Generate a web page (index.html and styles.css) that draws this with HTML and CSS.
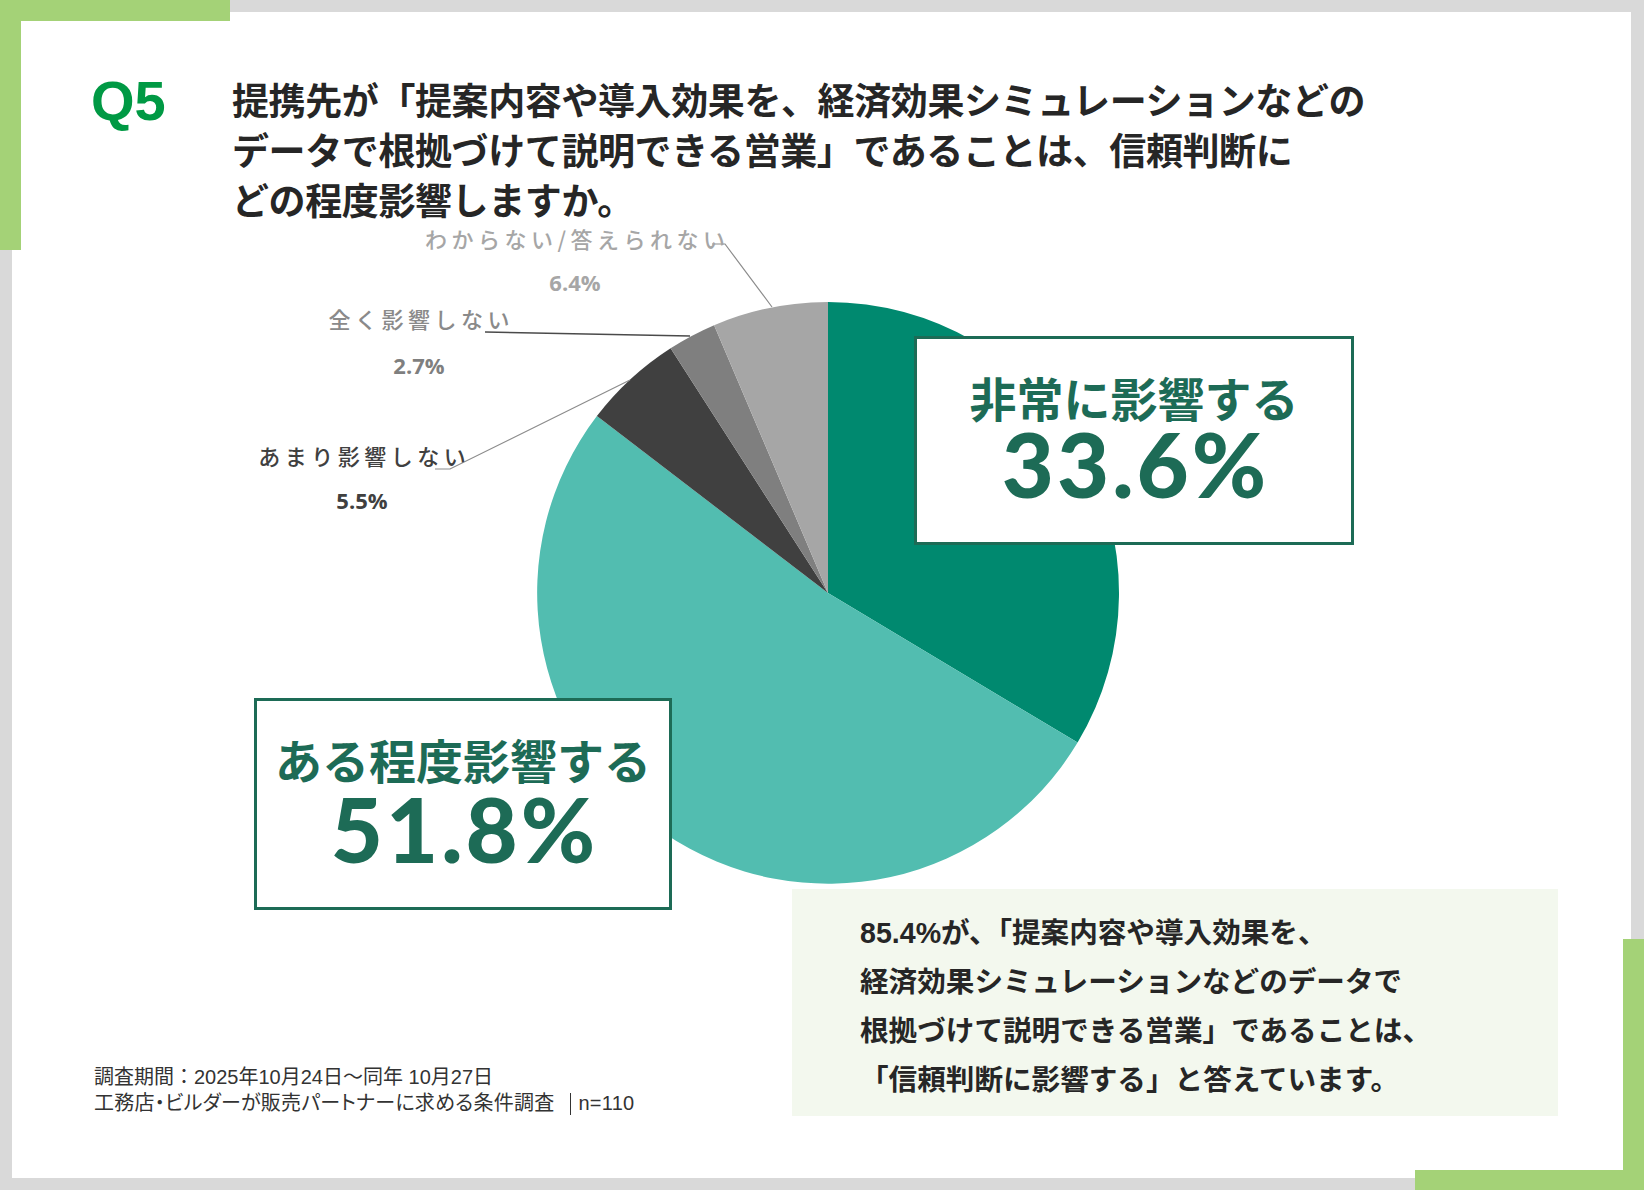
FILE: index.html
```html
<!DOCTYPE html>
<html lang="ja">
<head>
<meta charset="utf-8">
<title>Q5 調査結果</title>
<link rel="stylesheet" href="styles.css">
</head>
<body>
<div class="page">
  <div class="corner corner-tl"></div>
  <div class="corner corner-br"></div>
  <main class="panel">
    <header class="q-head">
      <div class="q-num">Q5</div>
      <h1 class="q-title">提携先が「提案内容や導入効果を、経済効果シミュレーションなどの<br>データで根拠づけて説明できる営業」であることは、信頼判断に<br>どの程度影響しますか。</h1>
    </header>

    <section class="chart">
      <svg class="pie" width="1619" height="679" viewBox="0 0 1619 679" xmlns="http://www.w3.org/2000/svg">
        <path class="s-high" d="M816,383 L816,92 A291,291 0 0 1 1065.6,532.6 Z"/>
        <path class="s-mid" d="M816,383 L1065.6,532.6 A291,291 0 1 1 584.9,206.1 Z"/>
        <path class="s-little" d="M816,383 L584.9,206.1 A291,291 0 0 1 658.6,138.3 Z"/>
        <path class="s-none" d="M816,383 L658.6,138.3 A291,291 0 0 1 702.1,115.2 Z"/>
        <path class="s-unknown" d="M816,383 L702.1,115.2 A291,291 0 0 1 816,92 Z"/>
        <polyline class="lead lead-unknown" points="700,34 713,34 760,97"/>
        <polyline class="lead lead-none" points="473,122 678,126"/>
        <polyline class="lead lead-little" points="423,259 438,259 618,170"/>
      </svg>

      <div class="pie-label l-unknown">
        <span class="pl-name">わからない/答えられない</span>
        <span class="pl-val">6.4%</span>
      </div>
      <div class="pie-label l-none">
        <span class="pl-name">全く影響しない</span>
        <span class="pl-val">2.7%</span>
      </div>
      <div class="pie-label l-little">
        <span class="pl-name">あまり影響しない</span>
        <span class="pl-val">5.5%</span>
      </div>

      <div class="result-box box-high">
        <span class="rb-label">非常に影響する</span>
        <span class="rb-value">33.6%</span>
      </div>
      <div class="result-box box-mid">
        <span class="rb-label">ある程度影響する</span>
        <span class="rb-value">51.8%</span>
      </div>
    </section>

    <section class="bottom">
      <div class="note">
        <p>調査期間：2025年10月24日～同年 10月27日</p>
        <p class="note-src">工務店・ビルダーが販売パートナーに求める条件調査<span class="sep"></span>n=110</p>
      </div>
      <div class="summary">
        <p>85.4%が、「提案内容や導入効果を、<br>経済効果シミュレーションなどのデータで<br>根拠づけて説明できる営業」であることは、<br>「信頼判断に影響する」と答えています。</p>
      </div>
    </section>
  </main>
</div>
</body>
</html>
```

FILE: styles.css
```css
* {
  box-sizing: border-box;
}

html, body {
  margin: 0;
  padding: 0;
}

body {
  width: 1644px;
  height: 1190px;
  overflow: hidden;
  background: #d9d9d9;
  font-family: "Noto Sans CJK JP", "Liberation Sans", sans-serif;
  color: #262626;
}

p, h1 {
  margin: 0;
}

.page {
  position: relative;
  width: 1644px;
  height: 1190px;
  padding: 12px 13px 12px 12px;
  background: #d9d9d9;
}

.corner {
  position: absolute;
  z-index: 3;
  border-color: #a4d277;
  border-style: solid;
  border-width: 0;
}

.corner-tl {
  left: 0;
  top: 0;
  width: 230px;
  height: 250px;
  border-top-width: 21px;
  border-left-width: 21px;
}

.corner-br {
  right: 0;
  bottom: 0;
  width: 229px;
  height: 251px;
  border-right-width: 21px;
  border-bottom-width: 20px;
}

.panel {
  height: 100%;
  background: #ffffff;
  display: flex;
  flex-direction: column;
}

/* header */
.q-head {
  display: flex;
  align-items: flex-start;
  padding: 61px 0 0 79px;
}

.q-num {
  width: 141px;
  flex: none;
  font-family: "Liberation Sans", Arial, sans-serif;
  font-weight: 700;
  font-size: 56px;
  line-height: 56px;
  color: #009944;
}

.q-title {
  margin-top: 1px;
  font-family: "Noto Sans CJK JP", sans-serif;
  font-weight: 700;
  font-size: 37px;
  line-height: 50px;
  letter-spacing: -0.4px;
  color: #262626;
  white-space: nowrap;
}

/* chart */
.chart {
  position: relative;
  margin-top: -14px;
  height: 679px;
  flex: none;
}

.pie {
  display: block;
}

.s-high { fill: #00896f; }
.s-mid { fill: #52bdb0; }
.s-little { fill: #404040; }
.s-none { fill: #7f7f7f; }
.s-unknown { fill: #a6a6a6; }

.lead {
  fill: none;
  stroke-width: 1.2;
}
.lead-unknown { stroke: #8c8c8c; }
.lead-none { stroke: #4a4a4a; stroke-width: 1.5; }
.lead-little { stroke: #8c8c8c; }

.pie-label {
  position: absolute;
  display: flex;
  flex-direction: column;
  align-items: center;
}

.pl-name {
  padding-left: 4.5px;
  font-family: "Noto Sans CJK JP", sans-serif;
  font-weight: 500;
  font-size: 22px;
  line-height: 26px;
  letter-spacing: 4.5px;
  white-space: nowrap;
}

.pl-val {
  margin-top: 18px;
  font-family: "Open Sans", "Liberation Sans", sans-serif;
  font-weight: 700;
  font-size: 22px;
  line-height: 26px;
}

.l-unknown {
  left: 403px;
  top: 15px;
  width: 320px;
  color: #a6a6a6;
}

.l-none {
  left: 297px;
  top: 95px;
  width: 220px;
  color: #8a8a8a;
}
.l-none .pl-val {
  margin-top: 21px;
  color: #7f7f7f;
}

.l-little {
  left: 230px;
  top: 232px;
  width: 240px;
  color: #404040;
}
.l-little .pl-val {
  margin-top: 19px;
}

.result-box {
  position: absolute;
  display: flex;
  flex-direction: column;
  align-items: center;
  background: #ffffff;
  border: 3px solid #1d6b56;
  color: #1d6b56;
}

.box-high {
  left: 902px;
  top: 126px;
  width: 440px;
  height: 209px;
}

.box-mid {
  left: 242px;
  top: 488px;
  width: 418px;
  height: 212px;
}

.rb-label {
  margin-top: 33px;
  font-family: "Noto Sans CJK JP", sans-serif;
  font-weight: 700;
  font-size: 47px;
  line-height: 50px;
  white-space: nowrap;
}

.rb-value {
  margin-top: 6px;
  padding-left: 3px;
  font-family: "Lato", "Open Sans", sans-serif;
  font-weight: 900;
  font-size: 90px;
  line-height: 70px;
  letter-spacing: 3px;
  white-space: nowrap;
}

.box-mid .rb-value {
  margin-top: 9px;
}

/* bottom */
.bottom {
  display: flex;
  align-items: flex-end;
  padding-left: 82px;
}

.note {
  font-family: "Liberation Sans", "Noto Sans CJK JP", sans-serif;
  font-size: 20px;
  line-height: 26px;
  color: #333333;
  white-space: nowrap;
}

.note-src {
  font-feature-settings: "palt";
  letter-spacing: 0.25px;
}

.sep {
  display: inline-block;
  width: 0;
  height: 22px;
  margin: 0 7px 0 16px;
  border-left: 1.5px solid #333333;
  vertical-align: -5px;
}

.summary {
  margin-left: auto;
  margin-right: 73px;
  width: 766px;
  height: 227px;
  padding: 20px 0 0 68px;
  background: #f3f8ee;
  font-family: "Liberation Sans", "Noto Sans CJK JP", sans-serif;
  font-weight: 700;
  font-size: 28.6px;
  line-height: 49px;
  color: #262626;
  white-space: nowrap;
}
```
